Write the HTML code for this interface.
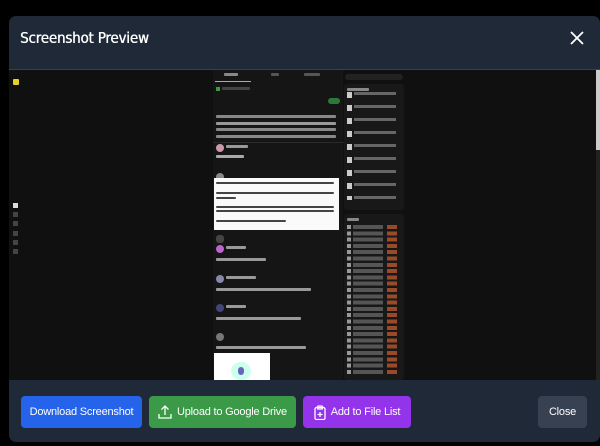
<!DOCTYPE html>
<html><head><style>
*{margin:0;padding:0;box-sizing:border-box}
body{width:600px;height:446px;background:#000;font-family:"Liberation Sans",sans-serif;position:relative;overflow:hidden}
.modal{position:absolute;left:9px;top:16px;width:591px;height:426px;background:#1f2937;border-radius:7px;overflow:hidden}
.hdr{height:54px;border-bottom:1px solid #374151;position:relative}
.hdr h1{position:absolute;left:11px;top:13px;color:#fff;font-size:15px;font-weight:normal;font-family:"DejaVu Sans Condensed","Liberation Sans",sans-serif;letter-spacing:-0.2px;text-shadow:0.4px 0 0 #fff}
.body{position:absolute;left:0;top:54px;width:591px;height:310px;background:#0d0d0d;overflow:hidden}
.foot{position:absolute;left:0;top:364px;width:591px;height:62px}
.btn{position:absolute;top:16px;height:32px;border-radius:4px;color:#fff;font-size:11px;font-family:"Liberation Sans",sans-serif;display:flex;align-items:center;justify-content:center;gap:5px;letter-spacing:-0.2px}
.r{position:absolute}
.ln{position:absolute;height:3px;background:#777;border-radius:1px}
</style></head><body>
<div class="modal">
 <div class="hdr"><h1>Screenshot Preview</h1>
  <svg class="r" style="left:561px;top:15px" width="14" height="14" viewBox="0 0 14 14"><path d="M1 1L13 13M13 1L1 13" stroke="#fff" stroke-width="1.8"/></svg>
 </div>
 <div class="body">
  <div class="r" style="left:0;top:0;width:591px;height:310px;background:#101010"></div>
  <div class="r" style="left:4px;top:9px;width:6px;height:6px;background:#e5d12a;border-radius:1px"></div>
  <div class="r" style="left:4px;top:133px;width:5px;height:5px;background:#ddd"></div>
  <div class="r" style="left:4px;top:142px;width:5px;height:5px;background:#444"></div>
  <div class="r" style="left:4px;top:151px;width:5px;height:5px;background:#444"></div>
  <div class="r" style="left:4px;top:161px;width:5px;height:5px;background:#444"></div>
  <div class="r" style="left:4px;top:170px;width:5px;height:5px;background:#444"></div>
  <div class="r" style="left:4px;top:179px;width:5px;height:5px;background:#444"></div>
  <div class="r" style="left:204px;top:0;width:130px;height:310px;background:#151515"></div>
  <div class="r" style="left:206px;top:11px;width:36px;height:1px;background:#aaa"></div>
  <div class="ln" style="left:215px;top:3px;width:14px;background:#888"></div>
  <div class="ln" style="left:262px;top:3px;width:8px;background:#555"></div>
  <div class="ln" style="left:295px;top:3px;width:16px;background:#555"></div>
  <div class="r" style="left:207px;top:17px;width:4px;height:4px;background:#3a9a3a"></div>
  <div class="ln" style="left:213px;top:17px;width:28px;background:#444"></div>
  <div class="r" style="left:319px;top:28px;width:12px;height:6px;background:#2c7a3a;border-radius:3px"></div>
  <div class="ln" style="left:207px;top:45px;width:120px;background:#888"></div>
  <div class="ln" style="left:207px;top:52px;width:120px;background:#999"></div>
  <div class="ln" style="left:207px;top:58px;width:120px;background:#888"></div>
  <div class="ln" style="left:207px;top:65px;width:120px;background:#888"></div>
  <div class="r" style="left:205px;top:72px;width:130px;height:1px;background:#2a2a2a"></div>
  <div class="r" style="left:207px;top:74px;width:8px;height:8px;background:#c9a;border-radius:50%"></div>
  <div class="ln" style="left:217px;top:75px;width:22px;background:#999"></div>
  <div class="ln" style="left:207px;top:85px;width:28px;background:#aaa"></div>
  <div class="r" style="left:207px;top:103px;width:8px;height:8px;background:#888;border-radius:50%"></div>
  <div class="r" style="left:205px;top:108px;width:125px;height:52px;background:#fafafa"></div>
  <div class="ln" style="left:207px;top:112px;width:118px;height:2px;background:#444"></div>
  <div class="ln" style="left:207px;top:122px;width:118px;height:2px;background:#444"></div>
  <div class="ln" style="left:207px;top:127px;width:20px;height:2px;background:#444"></div>
  <div class="ln" style="left:207px;top:136px;width:118px;height:2px;background:#444"></div>
  <div class="ln" style="left:207px;top:140px;width:118px;height:2px;background:#444"></div>
  <div class="ln" style="left:207px;top:150px;width:70px;height:2px;background:#444"></div>
  <div class="r" style="left:207px;top:165px;width:8px;height:8px;background:#444;border-radius:3px"></div>
  <div class="r" style="left:207px;top:175px;width:8px;height:8px;background:#b6c;border-radius:50%"></div>
  <div class="ln" style="left:217px;top:176px;width:20px;background:#999"></div>
  <div class="ln" style="left:207px;top:188px;width:50px;background:#999"></div>
  <div class="r" style="left:207px;top:205px;width:8px;height:8px;background:#88a;border-radius:50%"></div>
  <div class="ln" style="left:217px;top:206px;width:30px;background:#999"></div>
  <div class="ln" style="left:207px;top:218px;width:95px;background:#999"></div>
  <div class="r" style="left:207px;top:234px;width:8px;height:8px;background:#447;border-radius:50%"></div>
  <div class="ln" style="left:217px;top:235px;width:20px;background:#999"></div>
  <div class="ln" style="left:207px;top:247px;width:85px;background:#999"></div>
  <div class="r" style="left:207px;top:263px;width:8px;height:8px;background:#777;border-radius:50%"></div>
  <div class="ln" style="left:207px;top:276px;width:90px;background:#999"></div>
  <div class="r" style="left:205px;top:283px;width:56px;height:27px;background:#fff"></div>
  <div class="r" style="left:222px;top:292px;width:20px;height:18px;background:#cfe;border-radius:50%"></div>
  <div class="r" style="left:229px;top:297px;width:6px;height:8px;background:#66b;border-radius:3px"></div>
  <div class="r" style="left:336px;top:4px;width:58px;height:6px;background:#222;border-radius:3px"></div>
  <div class="r" style="left:335px;top:14px;width:60px;height:126px;background:#181818;border-radius:3px"></div>
  <div class="r" style="left:335px;top:144px;width:60px;height:166px;background:#181818;border-radius:3px"></div>
  <div class="ln" style="left:338px;top:18px;width:22px;background:#888"></div>
  <div class="r" style="left:338px;top:22px;width:5px;height:108px;background:repeating-linear-gradient(#ccc 0 6px,transparent 6px 13px)"></div>
  <div class="r" style="left:345px;top:22px;width:42px;height:108px;background:repeating-linear-gradient(#666 0 3px,transparent 3px 13px)"></div>
  <div class="ln" style="left:338px;top:148px;width:12px;background:#888"></div>
  <div class="r" style="left:338px;top:155px;width:50px;height:150px;background:repeating-linear-gradient(90deg,#999 0 4px,transparent 4px 6px,#555 6px 36px,transparent 36px 40px,#9a4a28 40px 50px);-webkit-mask:repeating-linear-gradient(#000 0 4px,transparent 4px 6.3px);mask:repeating-linear-gradient(#000 0 4px,transparent 4px 6.3px)"></div>
  <div class="r" style="left:587px;top:0;width:4px;height:310px;background:#222"></div>
  <div class="r" style="left:587px;top:0;width:4px;height:80px;background:#ccc"></div>
 </div>
 <div class="foot">
  <div class="btn" style="left:12px;width:121px;background:#2563eb">Download Screenshot</div>
  <div class="btn" style="left:140px;width:147px;background:#3a9a48">
   <svg width="14" height="14" viewBox="0 0 14 14" fill="none" stroke="#fff" stroke-width="1.3"><path d="M1 9v4h12V9M7 10V1M3.5 4.5L7 1l3.5 3.5"/></svg>Upload to Google Drive</div>
  <div class="btn" style="left:294px;width:108px;background:#9333ea">
   <svg width="12" height="15" viewBox="0 0 12 15" fill="none" stroke="#fff" stroke-width="1.3"><rect x="1" y="2.5" width="10" height="12" rx="1.5"/><rect x="3.5" y="1" width="5" height="3" rx="0.8"/><path d="M6 7v5M3.5 9.5h5"/></svg>Add to File List</div>
  <div class="btn" style="left:529px;width:49px;background:#374151">Close</div>
 </div>
</div>
</body></html>
